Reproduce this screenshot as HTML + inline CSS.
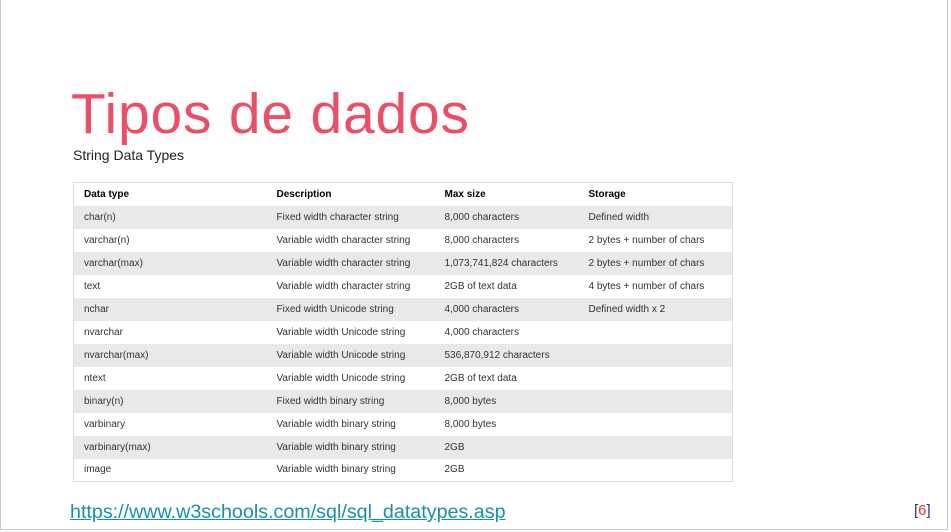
<!DOCTYPE html>
<html><head><style>
*{margin:0;padding:0;box-sizing:border-box}
body{width:951px;height:532px;background:#fff;position:relative;overflow:hidden;font-family:"Liberation Sans",sans-serif}
.frame{position:absolute;left:0;top:0;width:948px;height:530px;border:1px solid #c8c8c8;border-top:none}
h1{position:absolute;left:71px;top:79px;font-size:57px;font-weight:normal;color:#ea4f67;letter-spacing:0.8px;white-space:nowrap;line-height:70px}
.sub{position:absolute;left:73px;top:147px;font-size:14px;color:#222}
table{position:absolute;left:73px;top:182px;width:660px;border-collapse:collapse;border:1px solid #ddd;font-size:10px;color:#333}
td,th{height:23px;text-align:left;padding-left:10px;font-weight:normal;vertical-align:middle}
th{font-weight:bold;color:#000}
tr:nth-child(even){background:#e8e9ea}
.url{position:absolute;left:70px;top:501px;font-size:19.7px;color:#1a8fa8;text-decoration:underline}
.pg{position:absolute;left:914px;top:502px;font-size:15px;color:#1f3a6e}
.pg span{color:#e03030}
</style></head><body>
<div class="frame"></div>
<h1>Tipos de dados</h1>
<div class="sub">String Data Types</div>
<table>
<tr><th style="width:193px">Data type</th><th style="width:168px">Description</th><th style="width:144px">Max size</th><th>Storage</th></tr>
<tr><td>char(n)</td><td>Fixed width character string</td><td>8,000 characters</td><td>Defined width</td></tr>
<tr><td>varchar(n)</td><td>Variable width character string</td><td>8,000 characters</td><td>2 bytes + number of chars</td></tr>
<tr><td>varchar(max)</td><td>Variable width character string</td><td>1,073,741,824 characters</td><td>2 bytes + number of chars</td></tr>
<tr><td>text</td><td>Variable width character string</td><td>2GB of text data</td><td>4 bytes + number of chars</td></tr>
<tr><td>nchar</td><td>Fixed width Unicode string</td><td>4,000 characters</td><td>Defined width x 2</td></tr>
<tr><td>nvarchar</td><td>Variable width Unicode string</td><td>4,000 characters</td><td></td></tr>
<tr><td>nvarchar(max)</td><td>Variable width Unicode string</td><td>536,870,912 characters</td><td></td></tr>
<tr><td>ntext</td><td>Variable width Unicode string</td><td>2GB of text data</td><td></td></tr>
<tr><td>binary(n)</td><td>Fixed width binary string</td><td>8,000 bytes</td><td></td></tr>
<tr><td>varbinary</td><td>Variable width binary string</td><td>8,000 bytes</td><td></td></tr>
<tr><td>varbinary(max)</td><td>Variable width binary string</td><td>2GB</td><td></td></tr>
<tr><td>image</td><td>Variable width binary string</td><td>2GB</td><td></td></tr>
</table>
<div class="url">https://www.w3schools.com/sql/sql_datatypes.asp</div>
<div class="pg">[<span>6</span>]</div>
</body></html>
